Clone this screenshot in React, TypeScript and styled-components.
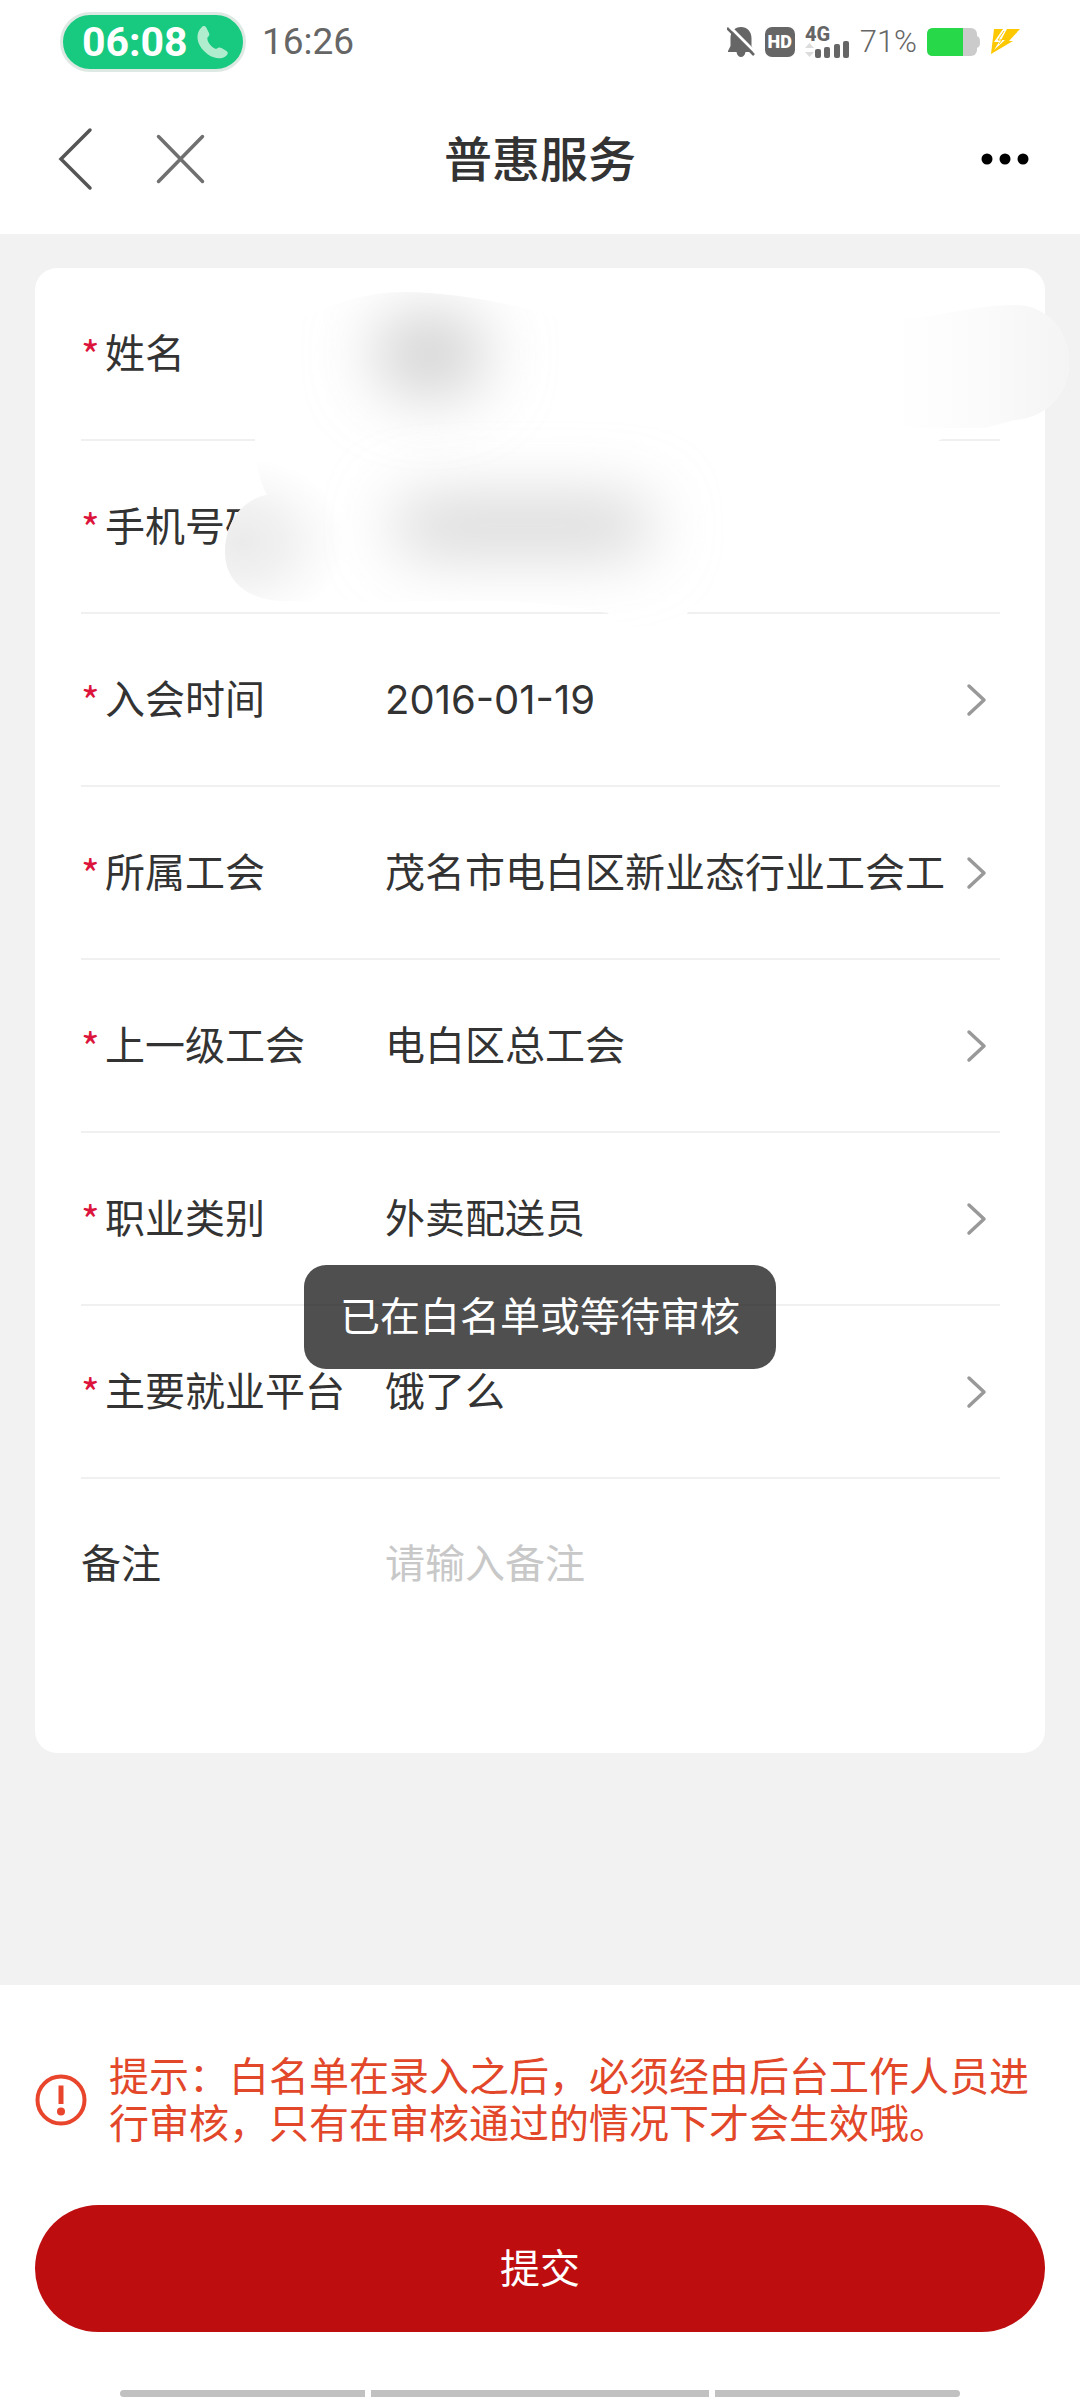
import React, { useState } from "react";
import styled, { createGlobalStyle } from "styled-components";

const body = `Inter, "Noto Sans CJK SC", "Noto Sans", sans-serif`;
const latin = `Roboto, "Noto Sans", sans-serif`;

const GlobalStyle = createGlobalStyle`
  *, *::before, *::after { box-sizing: border-box; }
  body { margin: 0; background: #f2f2f2; font-family: ${body}; color: #333; }
  button, input, textarea { font: inherit; color: inherit; }
`;

const Page = styled.div`
  display: flex;
  flex-direction: column;
  min-height: 100vh;
  overflow-x: hidden;
`;

const StatusBar = styled.div`
  display: flex;
  align-items: center;
  justify-content: space-between;
  height: 84px;
  padding: 0 60px;
  background: #fff;
  font-family: ${latin};
  color: #666;
`;

const StatusGroup = styled.div<{ $gap: number }>`
  display: flex;
  align-items: center;
  gap: ${(p) => p.$gap}px;
`;

const CallPill = styled.div`
  display: flex;
  align-items: center;
  justify-content: space-between;
  width: 186px;
  height: 60px;
  padding: 0 14px 0 19px;
  border: 3px solid #dfe9e4;
  border-radius: 30px;
  background: #18ca80;
  color: #fff;
`;

const CallTime = styled.span`
  font-size: 41px;
  font-weight: 700;
  line-height: 48px;
`;

const Clock = styled.span`
  font-size: 37px;
  line-height: 48px;
`;

const Percent = styled.span`
  font-size: 31px;
  font-weight: 300;
  line-height: 32px;
`;

const HdBadge = styled.span`
  width: 30px;
  height: 30px;
  border-radius: 7px;
  background: #666;
  color: #fff;
  font-size: 18px;
  font-weight: 900;
  line-height: 30px;
  text-align: center;
`;

const NavBar = styled.header`
  display: grid;
  grid-template-columns: 1fr auto 1fr;
  align-items: center;
  height: 150px;
  padding: 0 48px;
  background: #fff;
`;

const NavSide = styled.div<{ $end?: boolean }>`
  display: flex;
  gap: 40px;
  justify-content: ${(p) => (p.$end ? "flex-end" : "flex-start")};
`;

const IconButton = styled.button`
  display: grid;
  place-items: center;
  height: 64px;
  padding: 0;
  border: 0;
  background: none;
`;

const Title = styled.h1`
  margin: 0;
  padding-top: 2px;
  font-size: 48px;
  font-weight: 500;
  line-height: 64px;
`;

const Content = styled.form`
  position: relative;
  display: flex;
  flex: 1;
  flex-direction: column;
  justify-content: space-between;
`;

const Card = styled.section`
  position: relative;
  margin: 34px 35px 48px;
  padding: 0 45px 0 46px;
  border-radius: 22px;
  background: #fff;
`;

const Row = styled.div<{ $tall?: boolean }>`
  display: flex;
  align-items: ${(p) => (p.$tall ? "flex-start" : "center")};
  height: ${(p) => (p.$tall ? 274 : 173)}px;
  padding: ${(p) => (p.$tall ? "55px 0 0" : "0")};
  border-bottom: ${(p) => (p.$tall ? "0" : "2px solid #f0f0f0")};
  font-size: 40px;
  line-height: 60px;
`;

const Label = styled.label`
  display: flex;
  flex: none;
  width: 304px;
  white-space: nowrap;
`;

const Required = styled.span`
  width: 24px;
  color: #dc143c;
  font-family: "Noto Sans CJK SC", sans-serif;
`;

const Field = styled.input`
  flex: 1;
  min-width: 0;
  height: 60px;
  padding: 0;
  border: 0;
  outline: 0;
  background: none;
`;

const Remark = styled.textarea`
  flex: 1;
  min-width: 0;
  height: 180px;
  padding: 0;
  border: 0;
  outline: 0;
  resize: none;
  background: none;
  &::placeholder {
    color: #c8c8c8;
    opacity: 1;
  }
`;

const Chevron = styled.svg`
  flex: none;
  margin: 0 12px 0 20px;
`;

const Smudge = styled.svg`
  position: absolute;
  top: 0;
  left: 0;
  overflow: visible;
  pointer-events: none;
`;

const Toast = styled.div`
  position: absolute;
  top: 50%;
  left: 50%;
  padding: 22px 36px;
  border-radius: 22px;
  background: rgba(0, 0, 0, 0.69);
  color: #fff;
  font-size: 40px;
  line-height: 60px;
  white-space: nowrap;
  transform: translate(-50%, -50%);
`;

const Footer = styled.footer`
  padding: 68px 35px 3px;
  background: #fff;
`;

const Tip = styled.p`
  display: flex;
  align-items: center;
  gap: 22px;
  margin: 0 0 58px;
  color: #e2472a;
  font-size: 40px;
  line-height: 47px;
  svg {
    flex: none;
  }
`;

const Submit = styled.button`
  display: block;
  width: 100%;
  height: 127px;
  border: 0;
  border-radius: 64px;
  background: #bd0d0f;
  color: #fff;
  font-size: 40px;
  line-height: 60px;
`;

const GestureBar = styled.div`
  display: grid;
  grid-template-columns: 245fr 338fr 245fr;
  gap: 6px;
  margin: 58px 85px 0;
`;

const GestureSegment = styled.span`
  height: 7px;
  background: #c1c1c1;
  &:first-child {
    border-radius: 4px 0 0 4px;
  }
  &:last-child {
    border-radius: 0 4px 4px 0;
  }
`;

const SignalSvg = styled.svg`
  overflow: visible;
`;

const PhoneIcon = () => (
  <svg width="32" height="34" viewBox="0 0 32 34" aria-hidden="true">
    <path
      d="M4.500 2.500C6 0.500 8 0.500 9.500 3L12 8C12.800 10 12 11 10.500 12.500C9.500 16 14 22.500 19 24C21 22.500 22.500 22 24.500 23L29.500 26C31.500 27.500 31 29 29 31C25 34.500 17.500 34 11 29.500C4 24.500 0 17.500 0.500 11C0.800 7 2.500 4.500 4.500 2.500Z"
      fill="#b0ecce"
    />
  </svg>
);

const MutedBellIcon = () => (
  <svg width="28" height="32" viewBox="0 0 28 32" aria-hidden="true">
    <path
      d="M14 1C20 1 24.500 5.500 24.500 12V20L27 25V26H18.500C18 29.500 16 31 14 31C12 31 10 29.500 9.500 26H1V25L3.500 20V12C3.500 5.500 8 1 14 1Z"
      fill="#666"
    />
    <path d="M1 -1L29 27" stroke="#fff" strokeWidth="3" />
    <path d="M0 2L27 29" stroke="#666" strokeWidth="2.500" />
  </svg>
);

const SignalIcon = () => (
  <SignalSvg width="45" height="32" viewBox="0 0 45 32" role="img" aria-label="4G">
    <text x="0" y="15" fontFamily="Roboto, sans-serif" fontSize="20" fontWeight="800" fill="#666">
      4G
    </text>
    <path d="M0 22L4.500 17L9 22ZM0 26L4.500 31L9 26Z" fill="#dcdcdc" />
    <g fill="#666">
      <rect x="10" y="23" width="6" height="9" rx="2" />
      <rect x="19" y="21" width="6" height="11" rx="2" />
      <rect x="29" y="18" width="6" height="14" rx="2" />
      <rect x="38" y="15" width="6" height="17" rx="2" />
    </g>
  </SignalSvg>
);

const BatteryIcon = () => (
  <svg width="53" height="28" viewBox="0 0 53 28" aria-hidden="true">
    <rect width="50" height="28" rx="6" fill="#cbcbcb" />
    <path d="M50 8C52 9 53 10 53 14C53 18 52 19 50 20Z" fill="#cbcbcb" />
    <path d="M6 0H36V28H6Q0 28 0 22V6Q0 0 6 0Z" fill="#27d849" />
  </svg>
);

const BoltIcon = () => (
  <svg width="30" height="26" viewBox="0 0 30 26" aria-hidden="true">
    <path d="M4 0H30L19 12H23L1 25Z" fill="#fdc800" />
    <path d="M13 0L4 13H9L4 21L15 11H11L17 0Z" fill="#fff" />
    <path d="M14 2L8 11H12L9 15" fill="none" stroke="#fdc800" strokeWidth="1" />
  </svg>
);

const NextIcon = () => (
  <Chevron width="22" height="38" viewBox="0 0 22 38" aria-hidden="true">
    <path
      d="M3 5L18 19L3 33"
      fill="none"
      stroke="#999"
      strokeWidth="3.500"
      strokeLinecap="round"
      strokeLinejoin="round"
    />
  </Chevron>
);

const AlertIcon = () => (
  <svg width="52" height="52" viewBox="0 0 52 52" aria-hidden="true">
    <circle cx="26" cy="26" r="23.500" fill="none" stroke="#e8452c" strokeWidth="4" />
    <path d="M23.500 11.500H28.500V30H23.500Z" fill="#e8452c" />
    <circle cx="26" cy="37.500" r="4" fill="#e8452c" />
  </svg>
);

/* Privacy smear hiding the name and the phone number. */
const PrivacySmudge = () => (
  <Smudge width="1010" height="380" viewBox="0 0 1010 380" aria-hidden="true">
    <defs>
      <clipPath id="smear">
        <path d="M220 172C220 130 222 80 262 52C300 34 335 24 367 24C430 24 490 40 540 52L850 52C905 50 935 37 980 37C1012 37 1034 63 1034 94C1034 125 1012 150 980 152L904 172V290L656 337C650 365 590 370 573 345C520 335 480 332 440 333H250C215 333 190 315 190 284C190 252 210 230 232 227C224 212 220 195 220 172Z" />
      </clipPath>
      <radialGradient id="fade">
        <stop offset="0" stopColor="#ebebeb" />
        <stop offset="0.400" stopColor="#f1f1f1" />
        <stop offset="0.700" stopColor="#f9f9f9" />
        <stop offset="1" stopColor="#fff" />
      </radialGradient>
      <linearGradient id="edge" x1="0" x2="1">
        <stop offset="0" stopColor="#fff" />
        <stop offset="0.500" stopColor="#fbfbfb" />
        <stop offset="1" stopColor="#f4f4f4" />
      </linearGradient>
      <filter id="soft" filterUnits="userSpaceOnUse" x="100" y="-150" width="800" height="700">
        <feGaussianBlur stdDeviation="32" />
      </filter>
    </defs>
    <g clipPath="url(#smear)">
      <rect x="180" width="870" height="380" fill="#fff" />
      <ellipse cx="208" cy="274" rx="104" ry="84" fill="url(#fade)" />
      <ellipse cx="395" cy="86" rx="58" ry="44" fill="#d2d2d2" filter="url(#soft)" />
      <rect x="358" y="230" width="260" height="56" rx="28" fill="#d6d6d6" filter="url(#soft)" />
      <rect x="860" y="30" width="176" height="130" fill="url(#edge)" />
    </g>
  </Smudge>
);

type FieldInfo = { id: string; label: string; value: string; picker?: boolean };

const fields: FieldInfo[] = [
  { id: "name", label: "姓名", value: "" },
  { id: "phone", label: "手机号码", value: "" },
  { id: "joined", label: "入会时间", value: "2016-01-19", picker: true },
  { id: "union", label: "所属工会", value: "茂名市电白区新业态行业工会工", picker: true },
  { id: "parent", label: "上一级工会", value: "电白区总工会", picker: true },
  { id: "job", label: "职业类别", value: "外卖配送员", picker: true },
  { id: "platform", label: "主要就业平台", value: "饿了么", picker: true },
];

export default function App() {
  const [remark, setRemark] = useState("");

  return (
    <Page>
      <GlobalStyle />
      <StatusBar>
        <StatusGroup $gap={16}>
          <CallPill>
            <CallTime>06:08</CallTime>
            <PhoneIcon />
          </CallPill>
          <Clock>16:26</Clock>
        </StatusGroup>
        <StatusGroup $gap={10}>
          <MutedBellIcon />
          <HdBadge>HD</HdBadge>
          <SignalIcon />
          <Percent>71%</Percent>
          <BatteryIcon />
          <BoltIcon />
        </StatusGroup>
      </StatusBar>
      <NavBar>
        <NavSide>
          <IconButton type="button" aria-label="返回">
            <svg width="56" height="64" viewBox="0 0 56 64">
              <path d="M42 3L13 32L42 61" fill="none" stroke="#555" strokeWidth="3.500" strokeLinecap="round" />
            </svg>
          </IconButton>
          <IconButton type="button" aria-label="关闭">
            <svg width="72" height="64" viewBox="0 0 72 64">
              <path d="M14.500 9.500L58.500 54.500M58.500 9.500L14.500 54.500" stroke="#707070" strokeWidth="3.500" strokeLinecap="round" />
            </svg>
          </IconButton>
        </NavSide>
        <Title>普惠服务</Title>
        <NavSide $end>
          <IconButton type="button" aria-label="更多">
            <svg width="56" height="16" viewBox="0 0 56 16">
              <circle cx="11" cy="8" r="5.500" />
              <circle cx="29" cy="8" r="5.500" />
              <circle cx="47" cy="8" r="5.500" />
            </svg>
          </IconButton>
        </NavSide>
      </NavBar>
      <Content onSubmit={(e) => e.preventDefault()}>
        <Card>
          {fields.map((f) => (
            <Row key={f.id}>
              <Label htmlFor={f.id}>
                <Required>*</Required>
                {f.label}
              </Label>
              <Field id={f.id} type="text" value={f.value} readOnly />
              {f.picker && <NextIcon />}
            </Row>
          ))}
          <Row $tall>
            <Label htmlFor="remark">备注</Label>
            <Remark
              id="remark"
              placeholder="请输入备注"
              value={remark}
              onChange={(e) => setRemark(e.target.value)}
            />
          </Row>
          <PrivacySmudge />
        </Card>
        <Footer>
          <Tip>
            <AlertIcon />
            提示：白名单在录入之后，必须经由后台工作人员进行审核，只有在审核通过的情况下才会生效哦。
          </Tip>
          <Submit type="submit">提交</Submit>
          <GestureBar>
            <GestureSegment />
            <GestureSegment />
            <GestureSegment />
          </GestureBar>
        </Footer>
        <Toast role="status">已在白名单或等待审核</Toast>
      </Content>
    </Page>
  );
}
